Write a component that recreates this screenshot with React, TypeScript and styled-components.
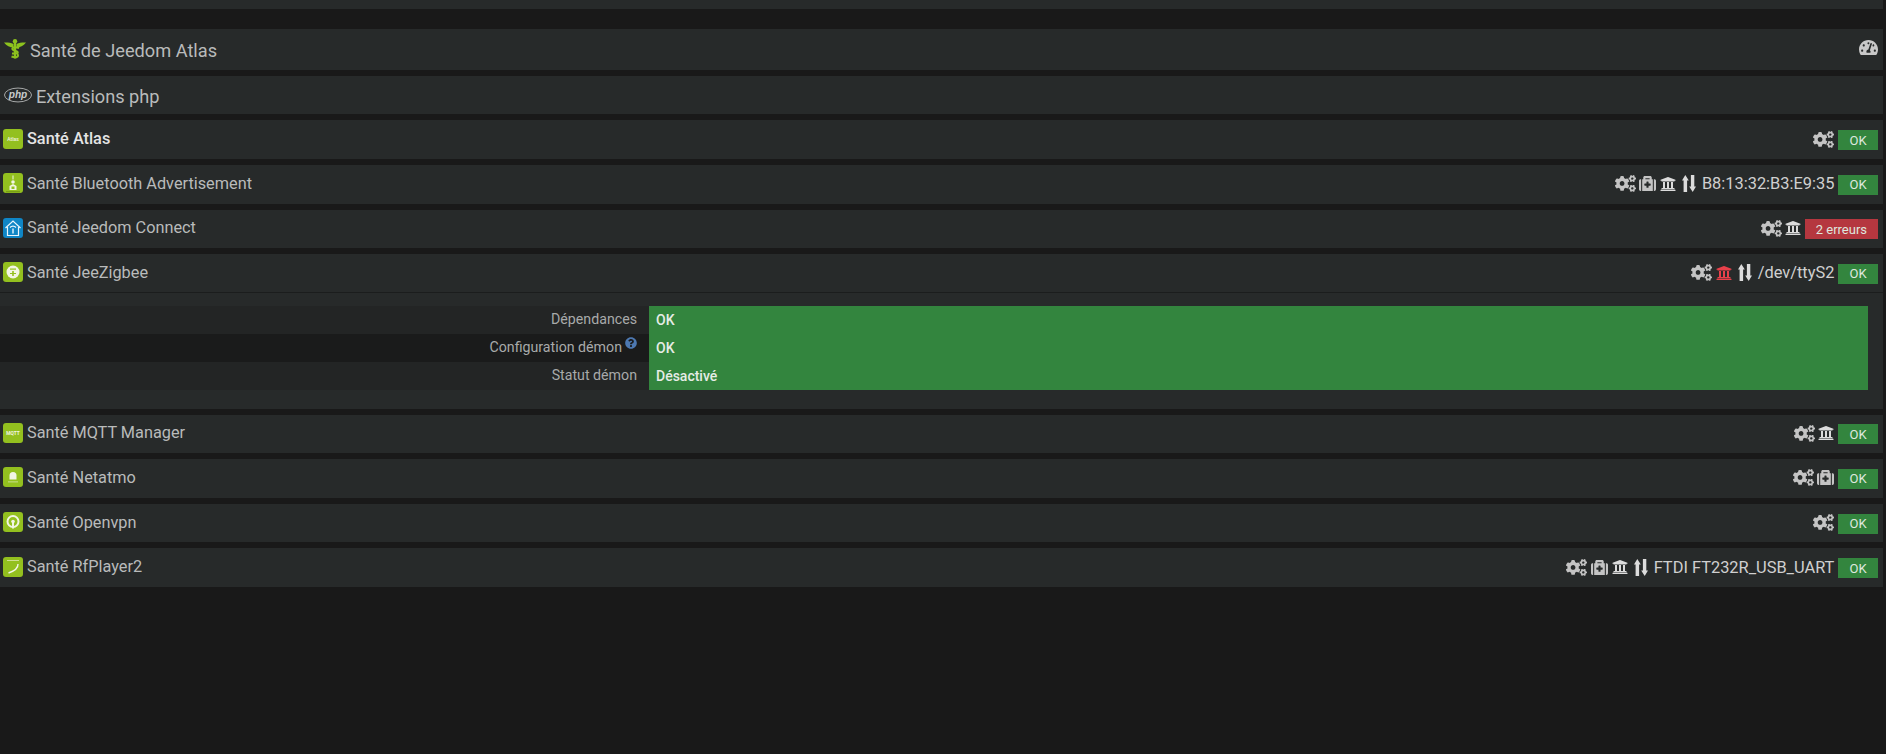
import React from "react";
import styled, { createGlobalStyle } from "styled-components";
import {
  FaCogs,
  FaMedkit,
  FaQuestionCircle,
  FaTachometerAlt,
  FaUniversity,
} from "react-icons/fa";

const GlobalStyle = createGlobalStyle`
  html, body {
    margin: 0;
    height: 100%;
    background: #191919;
    overflow: hidden;
  }
  body {
    font-family: Roboto, "Liberation Sans", sans-serif;
  }
`;

const Page = styled.div`
  width: 1883px;
  display: flex;
  flex-direction: column;
  gap: 6px;
`;

const TopStub = styled.div`
  height: 9px;
  margin-bottom: 14px;
  background: #272a2a;
`;

const Panel = styled.section`
  background: #272a2a;
`;

const TitleRow = styled.div<{ $height: number }>`
  height: ${(p) => p.$height}px;
  display: flex;
  align-items: center;
  justify-content: space-between;
  padding: 0 5px 0 4px;
  color: #b9bbbb;
  font-size: 18.2px;
  line-height: 1;
`;

const TitleLeft = styled.div`
  display: flex;
  align-items: center;
  gap: 4px;
`;

const TitleText = styled.span`
  margin-top: 4px;
`;

const GaugeIcon = styled(FaTachometerAlt)`
  width: 19px;
  height: 19px;
  color: #c8c8c8;
  margin-bottom: 5px;
`;

const PluginRow = styled.div<{ $open?: boolean }>`
  height: ${(p) => (p.$open ? 39 : 38.6)}px;
  box-sizing: border-box;
  display: flex;
  align-items: center;
  justify-content: space-between;
  padding: 0 5px 2px 3px;
  border-bottom: ${(p) => (p.$open ? "1px solid #1b1d1d" : "none")};
`;

const PluginName = styled.div<{ $active?: boolean }>`
  display: flex;
  align-items: center;
  gap: 4px;
  font-size: 16.3px;
  color: ${(p) => (p.$active ? "#e4e4e4" : "#b9bbbb")};
  font-weight: ${(p) => (p.$active ? 500 : 400)};
`;

const Status = styled.div`
  display: flex;
  align-items: center;
  gap: 3.6px;
  margin-top: 2px;
`;

const IconSlot = styled.span<{ $color?: string; $width: number; $height: number; $left?: number }>`
  display: inline-flex;
  align-items: center;
  margin-left: ${(p) => p.$left || 0}px;
  margin-bottom: 1px;
  color: ${(p) => p.$color || "#c4c4c4"};

  svg {
    width: ${(p) => p.$width}px;
    height: ${(p) => p.$height}px;
  }
`;

const Port = styled.span`
  color: #d0d0d0;
  font-size: 16.4px;
  white-space: nowrap;
  margin: 0 0 1px 2.4px;
`;

const Badge = styled.span<{ $error?: boolean }>`
  height: 20px;
  min-width: 40px;
  margin-top: 1px;
  padding: ${(p) => (p.$error ? "0 11px" : "0")};
  box-sizing: border-box;
  display: inline-flex;
  align-items: center;
  justify-content: center;
  background: ${(p) => (p.$error ? "#b5373f" : "#33853e")};
  color: #dfe8df;
  font-size: 13px;
`;

const Body = styled.div`
  padding: 13px 15px 0 0;
  height: 115.4px;
  box-sizing: border-box;
`;

const Table = styled.div`
  display: grid;
  grid-template-columns: 649px 1fr;
  grid-auto-rows: 28px;
`;

const Label = styled.div<{ $dark?: boolean }>`
  display: flex;
  align-items: center;
  justify-content: flex-end;
  gap: 3px;
  padding: 0 12px 2px 0;
  color: #a8aaaa;
  font-size: 14.2px;
  background: ${(p) => (p.$dark ? "#1a1b1b" : "#232525")};
`;

const Value = styled.div`
  display: flex;
  align-items: center;
  padding-left: 7px;
  background: #33853e;
  color: #e6ece6;
  font-size: 14px;
  font-weight: 500;
`;

const HelpIcon = styled(FaQuestionCircle)`
  width: 12px;
  height: 12px;
  color: #4d78b0;
  margin-bottom: 8px;
`;

const Tile = styled.svg`
  width: 20px;
  height: 20px;
  flex: none;
`;

const tileText = { fontFamily: "Roboto, sans-serif", fill: "#f2f5e4" };

type LogoKind = "atlas" | "bluetooth" | "connect" | "zigbee" | "mqtt" | "netatmo" | "openvpn" | "rfplayer";

// petits logos des plugins, simplifies
function PluginLogo({ kind }: { kind: LogoKind }) {
  const bg = kind === "connect" ? "#0f86c6" : "#93c01f";
  return (
    <Tile viewBox="0 0 20 20">
      <rect width="20" height="20" rx="3" fill={bg} />
      {kind === "atlas" && (
        <text x="10" y="12" fontSize="5" textAnchor="middle" style={tileText}>
          Atlas
        </text>
      )}
      {kind === "bluetooth" && (
        <g fill="#f2f5e4">
          <rect x="9.500" y="2.500" width="1" height="4" />
          <circle cx="10" cy="9" r="1.800" />
          <path d="M6.500 17v-4l3.500-2 3.500 2v4z" />
          <rect x="8.500" y="13.500" width="3" height="2.500" fill="#93c01f" />
          <rect x="3" y="18.500" width="14" height="0.700" fill="#5d7a10" />
        </g>
      )}
      {kind === "connect" && (
        <g fill="none" stroke="#eaf6fc" strokeWidth="1.200">
          <path d="M2.500 10 10 3l7.500 7M4.500 9v8.500h11V9" />
          <path d="M7 9.500a4 4 0 0 1 6 0" />
          <rect x="9.300" y="10.500" width="1.400" height="5" fill="#eaf6fc" stroke="none" />
        </g>
      )}
      {kind === "zigbee" && (
        <g>
          <circle cx="10" cy="10" r="6.500" fill="#f2f5e4" />
          <rect x="7" y="6.500" width="6" height="1.200" fill="#93c01f" />
          <rect x="9.200" y="9" width="1.600" height="5" fill="#93c01f" />
          <rect x="7" y="11" width="6" height="1" fill="#93c01f" />
        </g>
      )}
      {kind === "mqtt" && (
        <text x="10" y="11.800" fontSize="4.800" fontWeight="700" textAnchor="middle" style={tileText}>
          MQTT
        </text>
      )}
      {kind === "netatmo" && (
        <g fill="#f2f5e4">
          <path d="M6.500 12.500V8.500a3.500 3.500 0 0 1 7 0v4z" />
          <rect x="5" y="14.500" width="10" height="0.800" opacity="0.700" />
        </g>
      )}
      {kind === "openvpn" && (
        <g>
          <circle cx="10" cy="9.500" r="5.500" fill="none" stroke="#f2f5e4" strokeWidth="2" />
          <circle cx="10" cy="9.500" r="1.800" fill="#f2f5e4" />
          <rect x="9" y="10" width="2" height="6.500" fill="#f2f5e4" />
        </g>
      )}
      {kind === "rfplayer" && (
        <g>
          <path d="M15 7c.2 4-2 6.500-9.500 9" fill="none" stroke="#f2f5e4" strokeWidth="1.400" />
          <rect x="4" y="3" width="12" height="0.800" fill="#dfe8b0" />
        </g>
      )}
    </Tile>
  );
}

function CaduceusIcon() {
  return (
    <svg width="22" height="20" viewBox="0 0 22 20" fill="#8cc21e">
      <circle cx="11" cy="2.200" r="2.200" />
      <path d="M0 3.500c3.500-.2 6.500.2 9.500 1.500v3.500C6 8.500 2.500 7 0 3.500zM22 3.500c-3.500-.2-6.500.2-9.500 1.500v3.500c3.500 0 7-1.500 9.500-5z" />
      <rect x="9.800" y="4" width="2.400" height="15.500" />
      <path
        d="M15 9c-6-2.200-9 1-4.500 2.500 5 1.500 4.500 3.500-2.500 3M7.500 17.500c4 1.500 8 .5 6-2.500"
        fill="none"
        stroke="#8cc21e"
        strokeWidth="2"
      />
    </svg>
  );
}

const PhpSvg = styled.svg`
  width: 28px;
  height: 16px;
`;

function PhpLogo() {
  return (
    <PhpSvg viewBox="0 0 29 16">
      <ellipse cx="14.500" cy="8" rx="14" ry="7.200" fill="none" stroke="#b9bbbb" strokeWidth="0.900" />
      <text
        x="14.500"
        y="11"
        fontSize="10.500"
        fontStyle="italic"
        fontWeight="700"
        textAnchor="middle"
        fill="#c8caca"
        fontFamily="Liberation Sans, sans-serif"
      >
        php
      </text>
    </PhpSvg>
  );
}

function ArrowsIcon() {
  return (
    <svg viewBox="0 0 14 17" fill="currentColor">
      <path d="M3.300 0 6.800 5.500H5.100V17H1.600V5.500H0z" />
      <path d="M10.700 17 14 11.500h-1.700V0H8.900v11.500H7.200z" />
    </svg>
  );
}

type Dep = "cogs" | "medkit" | "bank" | "bankRed" | "arrows";

function DepIcon({ name }: { name: Dep }) {
  if (name === "cogs") return <IconSlot $width={21} $height={17}><FaCogs /></IconSlot>;
  if (name === "medkit") return <IconSlot $width={17} $height={17}><FaMedkit /></IconSlot>;
  if (name === "bank") return <IconSlot $width={16} $height={16} $color="#dcdcdc"><FaUniversity /></IconSlot>;
  if (name === "bankRed") return <IconSlot $width={16} $height={16} $color="#e8404a"><FaUniversity /></IconSlot>;
  return <IconSlot $width={14} $height={17} $left={2.4} $color="#dcdcdc"><ArrowsIcon /></IconSlot>;
}

type Plugin = {
  name: string;
  logo: LogoKind;
  icons: Dep[];
  port?: string;
  error?: string;
  active?: boolean;
};

const before: Plugin[] = [
  { name: "Santé Atlas", logo: "atlas", icons: ["cogs"], active: true },
  { name: "Santé Bluetooth Advertisement", logo: "bluetooth", icons: ["cogs", "medkit", "bank", "arrows"], port: "B8:13:32:B3:E9:35" },
  { name: "Santé Jeedom Connect", logo: "connect", icons: ["cogs", "bank"], error: "2 erreurs" },
];

const after: Plugin[] = [
  { name: "Santé MQTT Manager", logo: "mqtt", icons: ["cogs", "bank"] },
  { name: "Santé Netatmo", logo: "netatmo", icons: ["cogs", "medkit"] },
  { name: "Santé Openvpn", logo: "openvpn", icons: ["cogs"] },
  { name: "Santé RfPlayer2", logo: "rfplayer", icons: ["cogs", "medkit", "bank", "arrows"], port: "FTDI FT232R_USB_UART" },
];

function PluginHeader({ plugin, open }: { plugin: Plugin; open?: boolean }) {
  return (
    <PluginRow $open={open}>
      <PluginName $active={plugin.active}>
        <PluginLogo kind={plugin.logo} />
        {plugin.name}
      </PluginName>
      <Status>
        {plugin.icons.map((icon, i) => (
          <DepIcon key={i} name={icon} />
        ))}
        {plugin.port && <Port>{plugin.port}</Port>}
        <Badge $error={!!plugin.error}>{plugin.error || "OK"}</Badge>
      </Status>
    </PluginRow>
  );
}

export default function App() {
  return (
    <Page>
      <GlobalStyle />
      <TopStub />
      <Panel>
        <TitleRow $height={41}>
          <TitleLeft>
            <CaduceusIcon />
            <TitleText>Santé de Jeedom Atlas</TitleText>
          </TitleLeft>
          <GaugeIcon />
        </TitleRow>
      </Panel>
      <Panel>
        <TitleRow $height={38.4}>
          <TitleLeft>
            <PhpLogo />
            <TitleText>Extensions php</TitleText>
          </TitleLeft>
        </TitleRow>
      </Panel>
      {before.map((p) => (
        <Panel key={p.name}>
          <PluginHeader plugin={p} />
        </Panel>
      ))}
      <Panel>
        <PluginHeader
          plugin={{
            name: "Santé JeeZigbee",
            logo: "zigbee",
            icons: ["cogs", "bankRed", "arrows"],
            port: "/dev/ttyS2",
          }}
          open
        />
        <Body>
          <Table>
            <Label>Dépendances</Label>
            <Value>OK</Value>
            <Label $dark>
              Configuration démon <HelpIcon />
            </Label>
            <Value>OK</Value>
            <Label>Statut démon</Label>
            <Value>Désactivé</Value>
          </Table>
        </Body>
      </Panel>
      {after.map((p) => (
        <Panel key={p.name}>
          <PluginHeader plugin={p} />
        </Panel>
      ))}
    </Page>
  );
}
